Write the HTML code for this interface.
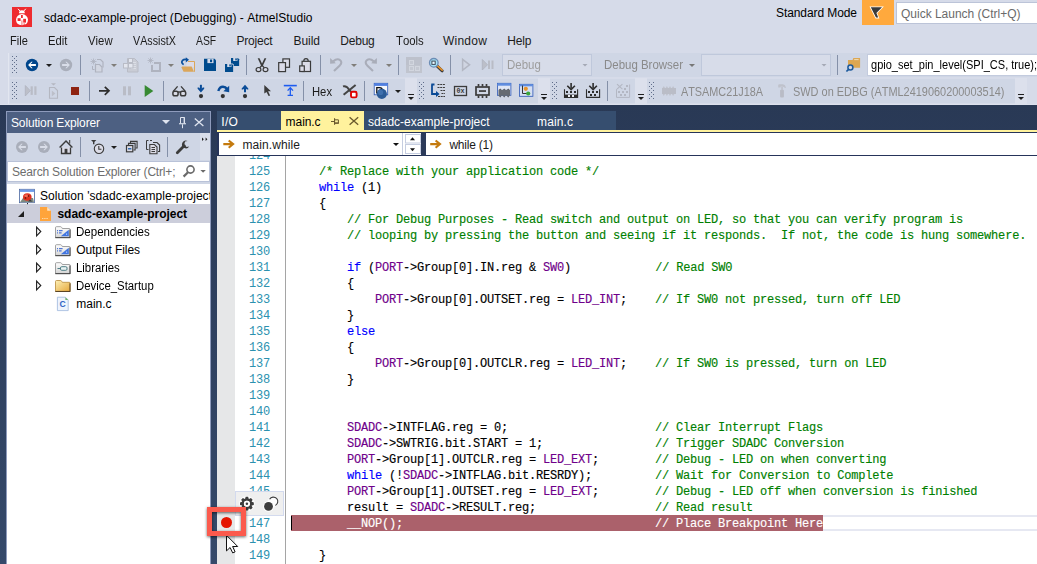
<!DOCTYPE html>
<html lang="en"><head><meta charset="utf-8"><title>sdadc-example-project (Debugging) - AtmelStudio</title>
<style>
html,body{margin:0;padding:0;}
body{width:1037px;height:564px;overflow:hidden;background:#d6dbe9;position:relative;font-family:"Liberation Sans",sans-serif;font-kerning:none;}
#app{position:absolute;left:0;top:0;width:1037px;height:564px;overflow:hidden;}
#app div,#app span,#app svg{position:absolute;}
#app div{box-sizing:border-box;}
.t{white-space:pre;line-height:1;transform-origin:0 50%;}
.c{white-space:pre;line-height:16px;height:16px;font-family:"Liberation Mono",monospace;font-size:12px;letter-spacing:-0.2px;color:#000;left:291px;-webkit-text-stroke:0.14px currentColor;}
#app .c span{position:static;}
.cm{color:#008000;} .kw{color:#0000ff;} .mc{color:#6f008a;} .hl{color:#fff;}
.n{white-space:pre;line-height:16px;height:16px;font-family:"Liberation Mono",monospace;font-size:12px;letter-spacing:-0.2px;color:#2b91af;left:249px;}
</style></head><body><div id="app">
<span class="t" style="left:44px;top:11.84px;font-size:12px;color:#000;letter-spacing:0.052px;">sdadc-example-project (Debugging) - AtmelStudio</span>
<span class="t" style="left:776px;top:6.84px;font-size:12px;color:#000;letter-spacing:-0.088px;">Standard Mode</span>
<div style="left:862px;top:0px;width:32px;height:25px;background:#ffa93d;"></div>
<div style="left:896px;top:2px;width:145px;height:22px;background:#fff;border:1px solid #bcc4d8;"></div>
<span class="t" style="left:901px;top:7.84px;font-size:12px;color:#6a6a6a;letter-spacing:-0.010px;">Quick Launch (Ctrl+Q)</span>
<span class="t" style="left:10.3px;top:34.84px;font-size:12px;color:#1b1b1b;transform:scaleX(0.9206);">File</span>
<span class="t" style="left:48.1px;top:34.84px;font-size:12px;color:#1b1b1b;transform:scaleX(0.9382);">Edit</span>
<span class="t" style="left:88.3px;top:34.84px;font-size:12px;color:#1b1b1b;transform:scaleX(0.9458);">View</span>
<span class="t" style="left:133.1px;top:34.84px;font-size:12px;color:#1b1b1b;transform:scaleX(0.8935);">VAssistX</span>
<span class="t" style="left:195.8px;top:34.84px;font-size:12px;color:#1b1b1b;transform:scaleX(0.8655);">ASF</span>
<span class="t" style="left:236.5px;top:34.84px;font-size:12px;color:#1b1b1b;letter-spacing:-0.191px;">Project</span>
<span class="t" style="left:293.5px;top:34.84px;font-size:12px;color:#1b1b1b;letter-spacing:-0.046px;">Build</span>
<span class="t" style="left:340.2px;top:34.84px;font-size:12px;color:#1b1b1b;letter-spacing:-0.190px;">Debug</span>
<span class="t" style="left:395.6px;top:34.84px;font-size:12px;color:#1b1b1b;transform:scaleX(0.9474);">Tools</span>
<span class="t" style="left:443.1px;top:34.84px;font-size:12px;color:#1b1b1b;letter-spacing:0.204px;">Window</span>
<span class="t" style="left:507.3px;top:34.84px;font-size:12px;color:#1b1b1b;letter-spacing:-0.193px;">Help</span>
<div style="left:10px;top:53px;width:1030px;height:24px;background:#cfd6e5;"></div>
<div style="left:10px;top:79px;width:395px;height:24px;background:#cfd6e5;"></div>
<div style="left:417px;top:79px;width:121px;height:24px;background:#cfd6e5;"></div>
<div style="left:549px;top:79px;width:86px;height:24px;background:#cfd6e5;"></div>
<div style="left:646px;top:79px;width:369px;height:24px;background:#cfd6e5;"></div>
<svg style="left:0;top:0" width="1037" height="105" viewBox="0 0 1037 105"><rect x="12" y="7" width="20" height="20" fill="#ee2b2f"/><path d="M19 13.2 Q19 10.2 21.9 10.2 Q24.8 10.2 24.8 13.2 Z" fill="#fff"/><path d="M20.2 11.2 L18 8.8 M23.6 11.2 L25.8 8.8" fill="none" stroke="#fff" stroke-width="1"/><path d="M22 14 Q27.2 14.6 28 19.6 Q28 25.2 22 25.2 Q16 25.2 16 19.6 Q16.8 14.6 22 14 Z" fill="#fff"/><rect x="21" y="15" width="1.8" height="3" fill="#ee2b2f"/><rect x="17.6" y="18.2" width="3" height="2.8" fill="#ee2b2f"/><rect x="23.2" y="18.8" width="2.8" height="3.8" fill="#ee2b2f"/><rect x="21.6" y="20.4" width="0.7" height="5" fill="#ee2b2f"/><rect x="23.4" y="23.6" width="1.6" height="1" fill="#ee2b2f"/><path d="M870.8 7.2 L882 7.2 L876.4 13 L878.2 17.6 L876 17.6 Z" fill="#fff" stroke="#fff" stroke-width="1.6" stroke-linejoin="miter"/><path d="M870.8 7.2 L882 7.2 L876.4 13 L878.2 17.6 L876 17.6 Z" fill="#3a3a3a"/><rect x="8" y="53" width="1" height="51" fill="#e2e6f0" shape-rendering="crispEdges"/><rect x="0" y="104" width="1037" height="1" fill="#dde1ed" shape-rendering="crispEdges"/><path d="M12 56h1v1h-1zM16 56h1v1h-1zM14 58h1v1h-1zM12 60h1v1h-1zM16 60h1v1h-1zM14 62h1v1h-1zM12 64h1v1h-1zM16 64h1v1h-1zM14 66h1v1h-1zM12 68h1v1h-1zM16 68h1v1h-1zM14 70h1v1h-1zM12 72h1v1h-1zM16 72h1v1h-1z" fill="#5f6d8a" shape-rendering="crispEdges"/><circle cx="32" cy="65" r="6.2" fill="#00468c"/><path d="M28.1 65 L31.3 61.8 H32.7 L30.5 64.1 H35.9 V65.9 H30.5 L32.7 68.2 H31.3 Z" fill="#fff"/><path d="M46.0 64h6l-3.0 3.0z" fill="#1e1e1e"/><circle cx="66" cy="65" r="6.2" fill="#a9aeba"/><path d="M69.9 65 L66.7 61.8 H65.30000000000001 L67.5 64.1 H62.1 V65.9 H67.5 L65.30000000000001 68.2 H66.7 Z" fill="#d9dde8"/><rect x="80" y="55" width="1" height="20" fill="#8490a8" shape-rendering="crispEdges"/><path d="M93.5 58.5v6M90.5 61.5h6M91.4 59.4l4.2 4.2M95.6 59.4l-4.2 4.2" fill="none" stroke="#afb3bf" stroke-width="0.8"/><path d="M97 59.5h3.5l2.5 2.5v5.5" fill="none" stroke="#afb3bf" stroke-width="1.2"/><path d="M95.5 64.5h4l2.5 2.5v5h-6.5z" fill="#d3d7e2" stroke="#afb3bf" stroke-width="1.2"/><path d="M92.5 66v3.5h2" fill="none" stroke="#afb3bf" stroke-width="1"/><path d="M111.0 64h6l-3.0 3.0z" fill="#807e7a"/><path d="M127.5 58.5h7l3.5 3.5v10h-10.5z" fill="#c9ccd5" stroke="#b9bcc6" stroke-width="1"/><path d="M131 62.5h5M131 64.5h5M131 66.5h5M131 68.5h5" fill="none" stroke="#dfe2ea" stroke-width="0.8"/><rect x="128.5" y="58.5" width="4" height="4" fill="#e3e6ee" stroke="#b9bcc6" stroke-width="1"/><rect x="123.5" y="63.5" width="4.5" height="4.5" fill="#e3e6ee" stroke="#b9bcc6" stroke-width="1"/><rect x="128.5" y="63.5" width="4.5" height="4.5" fill="#e3e6ee" stroke="#b9bcc6" stroke-width="1"/><path d="M150.5 57.5v6M147.5 60.5h6M148.4 58.4l4.2 4.2M152.6 58.4l-4.2 4.2" fill="none" stroke="#afb3bf" stroke-width="0.8"/><path d="M154 63h6v8h-8v-6" fill="none" stroke="#afb3bf" stroke-width="2"/><path d="M168.0 64h6l-3.0 3.0z" fill="#807e7a"/><path d="M188 61.5h6.5v10.3" fill="none" stroke="#dba65a" stroke-width="1"/><path d="M186.5 62h7.5v5h-7.5z" fill="#dcdce8"/><path d="M181.3 67.2 L182.2 66.5 H191.6 L194 71.7 H183.6 Z" fill="#dba65a"/><path d="M183.6 64.6 Q180.6 62.6 182.6 60.4 Q184 59 186.6 59.6" fill="none" stroke="#0a4f9c" stroke-width="1.7"/><path d="M185.8 57.2 L189 59.8 L185.8 62.4 Z" fill="#0a4f9c"/><path d="M204 58.8h10.6l1.4 1.4v10.8h-12z" fill="#004b8d"/><rect x="207.4" y="58.8" width="6.1" height="4.3" fill="#d5dae8"/><rect x="210" y="59.5" width="2.1" height="2.7" fill="#004b8d"/><path d="M231 58h6.9l1.2 1.2v6.7h-8.1z" fill="#004b8d"/><rect x="233.2" y="58" width="4.2" height="3" fill="#d5dae8"/><rect x="235.3" y="58.4" width="1.5" height="2" fill="#004b8d"/><path d="M224.4 63.4h8.2l1.4 1.4v7.8h-9.6z" fill="#cfd6e5"/><path d="M225 64h6.9l1.2 1.2v6.7h-8.1z" fill="#004b8d"/><rect x="227.2" y="64" width="4.2" height="3" fill="#d5dae8"/><rect x="229.3" y="64.4" width="1.5" height="2" fill="#004b8d"/><rect x="246" y="55" width="1" height="20" fill="#8490a8" shape-rendering="crispEdges"/><path d="M257.7 58.2 L259.5 58.2 L262.9 65.4 L261.6 66.8 Z" fill="#3b3b3b"/><path d="M266.3 58.2 L264.5 58.2 L261.1 65.4 L262.4 66.8 Z" fill="#3b3b3b"/><path d="M261.6 65.6 L259.6 68 M262.4 65.6 L264.4 68" fill="none" stroke="#3b3b3b" stroke-width="1.2"/><ellipse cx="258.5" cy="69.6" rx="2.4" ry="2.1" fill="#d6d9e6" stroke="#3b3b3b" stroke-width="1.2"/><ellipse cx="265.5" cy="69.6" rx="2.4" ry="2.1" fill="#d6d9e6" stroke="#3b3b3b" stroke-width="1.2"/><rect x="282.9" y="58.9" width="6.6" height="8.4" fill="#dcdce8" stroke="#3b3b3b" stroke-width="1.2"/><rect x="278.7" y="62.6" width="6.8" height="9" fill="#dcdce8" stroke="#3b3b3b" stroke-width="1.2"/><path d="M303.8 61 Q303.8 58.6 306 58.6 Q308.2 58.6 308.2 61" fill="none" stroke="#3b3b3b" stroke-width="1.2"/><rect x="302.1" y="61.3" width="8.4" height="10.2" fill="#dcdce8" stroke="#3b3b3b" stroke-width="1.2"/><rect x="299.7" y="65.9" width="4.6" height="5.6" fill="#dcdce8" stroke="#3b3b3b" stroke-width="1.2"/><rect x="320" y="55" width="1" height="20" fill="#8490a8" shape-rendering="crispEdges"/><path d="M334 71 L339.8 65.4 Q342.6 62.4 340.2 60.2 Q337.2 57.8 333.2 61.4" fill="none" stroke="#a9adb9" stroke-width="2.1"/><path d="M330.1 58 L335.9 63.3 L330.1 63.8 Z" fill="#a9adb9"/><path d="M351.0 64h6l-3.0 3.0z" fill="#807e7a"/><path d="M373 71 L367.2 65.4 Q364.4 62.4 366.8 60.2 Q369.8 57.8 373.8 61.4" fill="none" stroke="#a9adb9" stroke-width="2.1"/><path d="M376.9 58 L371.1 63.3 L376.9 63.8 Z" fill="#a9adb9"/><path d="M386.0 64h6l-3.0 3.0z" fill="#807e7a"/><rect x="398" y="55" width="1" height="20" fill="#8490a8" shape-rendering="crispEdges"/><rect x="406" y="57" width="16" height="16" fill="#bdc1cc"/><rect x="406" y="65" width="16" height="8" fill="#c0c4ce"/><rect x="409.5" y="60.5" width="4" height="4" fill="#c4c8d2" stroke="#d2d6df" stroke-width="1"/><rect x="409.5" y="66.5" width="4" height="4" fill="#c4c8d2" stroke="#d2d6df" stroke-width="1"/><rect x="415.5" y="66.5" width="4" height="4" fill="#c4c8d2" stroke="#d2d6df" stroke-width="1"/><path d="M437.2 66.2 L442.2 70.8" fill="none" stroke="#3d3d3d" stroke-width="3" stroke-linecap="round"/><path d="M437.4 65.8 L442.2 70.2" fill="none" stroke="#e8932a" stroke-width="1.6" stroke-linecap="round"/><circle cx="433.8" cy="62.8" r="4.3" fill="#a5e3f7" stroke="#6c8db5" stroke-width="1.3"/><rect x="431.9" y="61.1" width="3.3" height="3.3" fill="#eafaff" stroke="#3f4a58" stroke-width="1"/><rect x="450" y="55" width="1" height="20" fill="#8490a8" shape-rendering="crispEdges"/><path d="M462.6 59.4 L469.6 64.8 L462.6 70.2 Z" fill="#d0d5e2" stroke="#b3b7c3" stroke-width="1.5"/><path d="M482.3 59.5 L487.5 64.8 L482.3 70 Z" fill="#bcbfc9" stroke="#afb3bf" stroke-width="0.8"/><rect x="488" y="60.5" width="2" height="8.5" fill="#b9bcc6"/><rect x="491.5" y="60.5" width="2" height="8.5" fill="#b9bcc6"/><rect x="502.5" y="54.5" width="89" height="21" fill="#d7dce9" stroke="#bfc8db" stroke-width="1"/><path d="M582.5 64h5l-2.5 2.5z" fill="#a5a9b5"/><path d="M689.0 64h6l-3.0 3.0z" fill="#777"/><rect x="701.5" y="54.5" width="129" height="21" fill="#d7dce9" stroke="#bfc8db" stroke-width="1"/><path d="M821.5 64h5l-2.5 2.5z" fill="#a5a9b5"/><rect x="837" y="55" width="1" height="20" fill="#8490a8" shape-rendering="crispEdges"/><path d="M848 60.1h4.6l0.8-2.1h6.7v9.8h-12.1z" fill="#dca753"/><rect x="854.2" y="59.2" width="4.4" height="0.9" fill="#f3e3c4"/><circle cx="850.4" cy="67.5" r="2.5" fill="#d2d8e6" stroke="#1c5a9c" stroke-width="1.5"/><path d="M848.6 69.3 L846.4 71.5" fill="none" stroke="#1c5a9c" stroke-width="1.7"/><path d="M12 82h1v1h-1zM16 82h1v1h-1zM14 84h1v1h-1zM12 86h1v1h-1zM16 86h1v1h-1zM14 88h1v1h-1zM12 90h1v1h-1zM16 90h1v1h-1zM14 92h1v1h-1zM12 94h1v1h-1zM16 94h1v1h-1zM14 96h1v1h-1zM12 98h1v1h-1zM16 98h1v1h-1z" fill="#5f6d8a" shape-rendering="crispEdges"/><path d="M25.3 85.5 L30.3 90.7 L25.3 96 Z" fill="#bcbfc9" stroke="#afb3bf" stroke-width="0.8"/><rect x="30.6" y="86.3" width="2.2" height="8.6" fill="#b9bcc6"/><rect x="34.3" y="86.3" width="2.2" height="8.6" fill="#b9bcc6"/><path d="M51 83.2h5l-2.5 2.3z" fill="#b4b7c1"/><path d="M49.5 87.5h5l3 3v7.8h-8z" fill="none" stroke="#b4b7c1" stroke-width="1.1"/><path d="M51.8 90.5l3.6 3-3.6 3z" fill="#bcbfc9"/><rect x="71" y="87" width="8" height="8" fill="#8e2311"/><rect x="89" y="81" width="1" height="20" fill="#8490a8" shape-rendering="crispEdges"/><path d="M99 90.8 H108.5 M104.8 86.8 L109 90.8 L104.8 94.8" fill="none" stroke="#2d2d2d" stroke-width="1.7"/><rect x="123" y="86.3" width="3" height="9" fill="#b9bcc6"/><rect x="128" y="86.3" width="3" height="9" fill="#b9bcc6"/><path d="M144.7 85 L153.3 91 L144.7 97 Z" fill="#378a33"/><rect x="163" y="81" width="1" height="20" fill="#8490a8" shape-rendering="crispEdges"/><rect x="172.9" y="91.3" width="5.2" height="4.5" fill="#d9dbe6" stroke="#3b3b3b" stroke-width="1.5" rx="1.8"/><rect x="180.5" y="91.3" width="5.2" height="4.5" fill="#d9dbe6" stroke="#3b3b3b" stroke-width="1.5" rx="1.8"/><path d="M177.8 92h3" fill="none" stroke="#3b3b3b" stroke-width="1.4"/><path d="M173 91.6 L177.6 86.4 M185.6 91.6 L181 86.4" fill="none" stroke="#3b3b3b" stroke-width="1.4"/><path d="M200.9 84.8 V90" fill="none" stroke="#0a4c98" stroke-width="2"/><path d="M197.6 87.6 L199 87.6 L200.9 89.4 L202.8 87.6 L204.2 87.6 L204.2 88.8 L200.9 92.4 L197.6 88.8 Z" fill="#0a4c98"/><circle cx="201" cy="96.1" r="2.1" fill="#333"/><path d="M218.3 91 Q219.6 86.6 223 86.7 Q225.6 86.8 227 89" fill="none" stroke="#0a4c98" stroke-width="2.4"/><path d="M229.2 85.8 V92.2 L223.4 91.2 Z" fill="#0a4c98"/><circle cx="222.8" cy="96.1" r="2.1" fill="#333"/><path d="M245 92.2 V87.4" fill="none" stroke="#0a4c98" stroke-width="2"/><path d="M241.7 89.6 L243.1 89.6 L245 87.8 L246.9 89.6 L248.3 89.6 L248.3 88.4 L245 84.8 L241.7 88.4 Z" fill="#0a4c98"/><circle cx="245" cy="96.1" r="2.1" fill="#333"/><path d="M264.3 84.9 L264.3 93.6 L266.5 91.9 L268.6 96.1 L270.1 95.4 L268.1 91.3 L271 91.2 Z" fill="#3b3b3b"/><rect x="283.8" y="84.8" width="13" height="1.6" fill="#1e5cf0"/><path d="M290.3 88 V95.3 M287.6 95.4 H293" fill="none" stroke="#1e5cf0" stroke-width="1.3"/><path d="M287.6 90.6 L290.3 87.7 L293 90.6" fill="none" stroke="#1e5cf0" stroke-width="1.3"/><rect x="303" y="81" width="1" height="20" fill="#8490a8" shape-rendering="crispEdges"/><path d="M343 86.4 Q346.6 85.4 349.4 90 Q352 94.2 356.4 92.4" fill="none" stroke="#444" stroke-width="2"/><path d="M343.6 94.8 L355.6 85" fill="none" stroke="#444" stroke-width="2"/><rect x="351" y="91.8" width="5.6" height="5.6" fill="#fff" stroke="#e00000" stroke-width="1.9" rx="1.5"/><rect x="364" y="81" width="1" height="20" fill="#8490a8" shape-rendering="crispEdges"/><rect x="374.2" y="83.3" width="13.5" height="11.5" fill="#f4f6fb" stroke="#2c57b5" stroke-width="0.8"/><rect x="374.2" y="83.3" width="13.5" height="2.6" fill="#4f7fe0"/><path d="M376.8 87.6h2.8q2.6 0 2.6 2.6 q0 2.6 -2.6 2.6h-2.8z" fill="none" stroke="#111" stroke-width="1.3"/><circle cx="381.8" cy="93.8" r="5.1" fill="#2b5b97"/><circle cx="380.6" cy="92.4" r="2.6" fill="#3f70ae"/><path d="M395.0 90h6l-3.0 3.0z" fill="#1e1e1e"/><rect x="405" y="78" width="12" height="26" fill="#dce0ec" shape-rendering="crispEdges"/><rect x="408" y="94" width="6" height="1" fill="#1e1e1e" shape-rendering="crispEdges"/><path d="M408 97h6l-3 3z" fill="#1e1e1e"/><path d="M419 82h1v1h-1zM423 82h1v1h-1zM421 84h1v1h-1zM419 86h1v1h-1zM423 86h1v1h-1zM421 88h1v1h-1zM419 90h1v1h-1zM423 90h1v1h-1zM421 92h1v1h-1zM419 94h1v1h-1zM423 94h1v1h-1zM421 96h1v1h-1zM419 98h1v1h-1zM423 98h1v1h-1z" fill="#5f6d8a" shape-rendering="crispEdges"/><path d="M431.3 84.5 H434.5 M432 84.5 V94 H437" fill="none" stroke="#0a4a96" stroke-width="1.8"/><path d="M436 91 L439.6 94 L436 97 Z" fill="#0a4a96"/><path d="M437.5 84.5h7.5M437.5 87.5h7.5M440.5 90.5h4.5M441.5 93.5h3.5M438 96.5h7" fill="none" stroke="#3b3b3b" stroke-width="1" stroke-dasharray="2 0.7"/><rect x="454.5" y="86.5" width="12" height="9" fill="none" stroke="#3b3b3b" stroke-width="1.3"/><text x="456.5" y="93.4" font-family="Liberation Mono, monospace" font-weight="bold" font-size="6.6" fill="#3b3b3b" textLength="8" lengthAdjust="spacingAndGlyphs">0x</text><rect x="476" y="87" width="13" height="8" fill="none" stroke="#3b3b3b" stroke-width="1.7"/><rect x="479" y="90.2" width="7" height="1.7" fill="#3b3b3b"/><path d="M478.5 84v2.5M482.5 84v2.5M486.5 84v2.5M478.5 95.5v2.5M482.5 95.5v2.5M486.5 95.5v2.5" fill="none" stroke="#3b3b3b" stroke-width="1.7"/><rect x="497.4" y="83.3" width="13.5" height="12" fill="#dfe6f5" stroke="#2c57b5" stroke-width="0.8"/><rect x="497.4" y="83.3" width="13.5" height="2.4" fill="#5f8de0"/><rect x="498.5" y="89.8" width="11.5" height="6" fill="#666b73"/><path d="M500.2 88.6l1.4 1.4h-2.8zM504.2 88.6l1.4 1.4h-2.8zM508.2 88.6l1.4 1.4h-2.8zM500.2 97.4l1.4-1.6h-2.8zM504.2 97.4l1.4-1.6h-2.8zM508.2 97.4l1.4-1.6h-2.8z" fill="#555a62"/><rect x="519.4" y="84.3" width="13.5" height="12" fill="#d5dff3" stroke="#2c57b5" stroke-width="0.8"/><rect x="519.4" y="84.3" width="13.5" height="2" fill="#5f8de0"/><path d="M522.5 85.5 V93.5 H527" fill="none" stroke="#333" stroke-width="1"/><circle cx="525.8" cy="88.8" r="2.1" fill="#e8962e"/><circle cx="528.2" cy="93.5" r="2.1" fill="#3aa63a"/><rect x="538" y="78" width="12" height="26" fill="#dce0ec" shape-rendering="crispEdges"/><rect x="541" y="94" width="6" height="1" fill="#1e1e1e" shape-rendering="crispEdges"/><path d="M541 97h6l-3 3z" fill="#1e1e1e"/><path d="M552 82h1v1h-1zM556 82h1v1h-1zM554 84h1v1h-1zM552 86h1v1h-1zM556 86h1v1h-1zM554 88h1v1h-1zM552 90h1v1h-1zM556 90h1v1h-1zM554 92h1v1h-1zM552 94h1v1h-1zM556 94h1v1h-1zM554 96h1v1h-1zM552 98h1v1h-1zM556 98h1v1h-1z" fill="#5f6d8a" shape-rendering="crispEdges"/><path d="M571.1 83 V88.6" fill="none" stroke="#2d2d2d" stroke-width="1.6"/><path d="M567.3 85.8 L571.1 89.6 L574.9 85.8" fill="none" stroke="#2d2d2d" stroke-width="1.6"/><path d="M564.5 89.2 V97.4 H577.6 V89.2" fill="none" stroke="#2d2d2d" stroke-width="1.1"/><rect x="566" y="91" width="2" height="2" fill="#2d2d2d" shape-rendering="crispEdges"/><rect x="570" y="91" width="2" height="2" fill="#2d2d2d" shape-rendering="crispEdges"/><rect x="574" y="91" width="2" height="2" fill="#2d2d2d" shape-rendering="crispEdges"/><rect x="564.5" y="94.6" width="13.1" height="3.3" fill="#2d2d2d"/><rect x="568" y="95" width="2" height="2" fill="#eceef5" shape-rendering="crispEdges"/><rect x="572" y="95" width="2" height="2" fill="#eceef5" shape-rendering="crispEdges"/><path d="M593.1 83 V88.6" fill="none" stroke="#2d2d2d" stroke-width="1.6"/><path d="M589.3 85.8 L593.1 89.6 L596.9 85.8" fill="none" stroke="#2d2d2d" stroke-width="1.6"/><path d="M586.5 89.2 V97.4 H599.6 V89.2" fill="none" stroke="#2d2d2d" stroke-width="1.1"/><rect x="588" y="91" width="2" height="2" fill="#2d2d2d" shape-rendering="crispEdges"/><rect x="592" y="91" width="2" height="2" fill="#2d2d2d" shape-rendering="crispEdges"/><rect x="596" y="91" width="2" height="2" fill="#2d2d2d" shape-rendering="crispEdges"/><rect x="590" y="94" width="2" height="2" fill="#2d2d2d" shape-rendering="crispEdges"/><rect x="594" y="94" width="2" height="2" fill="#2d2d2d" shape-rendering="crispEdges"/><rect x="607" y="81" width="1" height="20" fill="#8490a8" shape-rendering="crispEdges"/><path d="M616.5 89.2 V97.4 H629.6 V84.5" fill="none" stroke="#b3b7c3" stroke-width="1"/><path d="M617 84.2 l5.4 5 M622.4 84.2 l-5.4 5" fill="none" stroke="#b3b7c3" stroke-width="1.1"/><rect x="626" y="85" width="2" height="2" fill="#b3b7c3" shape-rendering="crispEdges"/><rect x="624" y="88" width="2" height="2" fill="#b3b7c3" shape-rendering="crispEdges"/><rect x="618" y="91" width="2" height="2" fill="#b3b7c3" shape-rendering="crispEdges"/><rect x="622" y="91" width="2" height="2" fill="#b3b7c3" shape-rendering="crispEdges"/><rect x="626" y="91" width="2" height="2" fill="#b3b7c3" shape-rendering="crispEdges"/><rect x="620" y="94" width="2" height="2" fill="#b3b7c3" shape-rendering="crispEdges"/><rect x="624" y="94" width="2" height="2" fill="#b3b7c3" shape-rendering="crispEdges"/><rect x="635" y="78" width="12" height="26" fill="#dce0ec" shape-rendering="crispEdges"/><rect x="638" y="94" width="6" height="1" fill="#1e1e1e" shape-rendering="crispEdges"/><path d="M638 97h6l-3 3z" fill="#1e1e1e"/><path d="M649 82h1v1h-1zM653 82h1v1h-1zM651 84h1v1h-1zM649 86h1v1h-1zM653 86h1v1h-1zM651 88h1v1h-1zM649 90h1v1h-1zM653 90h1v1h-1zM651 92h1v1h-1zM649 94h1v1h-1zM653 94h1v1h-1zM651 96h1v1h-1zM649 98h1v1h-1zM653 98h1v1h-1z" fill="#5f6d8a" shape-rendering="crispEdges"/><rect x="662" y="88" width="14" height="6" fill="#babdc7"/><path d="M662.6 88l1.2-2 1.2 2zM665.7 88l1.2-2 1.2 2zM668.8 88l1.2-2 1.2 2zM671.9 88l1.2-2 1.2 2zM662.6 94l1.2 2 1.2-2zM665.7 94l1.2 2 1.2-2zM668.8 94l1.2 2 1.2-2zM671.9 94l1.2 2 1.2-2z" fill="#bfc2cc"/><rect x="780.1" y="89.8" width="3.8" height="7.6" fill="#b9bcc6" rx="0.9"/><rect x="781.2" y="86.6" width="1.7" height="3.6" fill="#bfc2cc"/><path d="M778.2 87.6 V85 Q778.2 84.2 779.4 84.2 H783 Q785.4 84.6 786 87.8 L785 88 Q784 86.4 782 86.4 H780.6 V87.6 Z" fill="#bfc2cc"/><rect x="1015" y="78" width="12" height="26" fill="#dce0ec" shape-rendering="crispEdges"/><rect x="1018" y="94" width="6" height="1" fill="#1e1e1e" shape-rendering="crispEdges"/><path d="M1018 97h6l-3 3z" fill="#1e1e1e"/></svg>
<span class="t" style="left:506.7px;top:58.84px;font-size:12px;color:#9d9d9d;transform:scaleX(0.9558);">Debug</span>
<span class="t" style="left:603.5px;top:58.84px;font-size:12px;color:#8a8a8a;transform:scaleX(0.9552);">Debug Browser</span>
<div style="left:867px;top:54px;width:175px;height:22px;background:#fff;border:1px solid #c3cbde;"></div>
<span class="t" style="left:870.5px;top:58.84px;font-size:12px;color:#000;transform:scaleX(0.9183);">gpio_set_pin_level(SPI_CS, true);</span>
<span class="t" style="left:311.5px;top:85.84px;font-size:12px;color:#1b1b1b;transform:scaleX(0.9372);">Hex</span>
<span class="t" style="left:681px;top:85.84px;font-size:12px;color:#8a8a8a;transform:scaleX(0.9040);">ATSAMC21J18A</span>
<span class="t" style="left:793px;top:85.84px;font-size:12px;color:#8a8a8a;transform:scaleX(0.9111);">SWD on EDBG (ATML2419060200003514)</span>
<div style="left:0px;top:105px;width:1037px;height:459px;background:#293955;background:linear-gradient(#293955 0px,#2a3a57 30px,#35496a 459px);"></div>
<div style="left:6px;top:111px;width:205px;height:453px;background:#fff;border-left:1px solid #8e9bbc;border-top:1px solid #8e9bbc;border-right:1px solid #8e9bbc;"></div>
<div style="left:7px;top:112px;width:203px;height:21px;background:#4d6082;"></div>
<span class="t" style="left:11px;top:116.84px;font-size:12px;color:#fff;letter-spacing:-0.149px;">Solution Explorer</span>
<div style="left:7px;top:133px;width:203px;height:51px;background:#cfd6e5;"></div>
<div style="left:7px;top:161px;width:203px;height:21px;background:#fff;border:1px solid #b9c2d8;"></div>
<span class="t" style="left:12px;top:165.84px;font-size:12px;color:#6d6d6d;letter-spacing:-0.180px;">Search Solution Explorer (Ctrl+;</span>
<div style="left:7px;top:204px;width:203px;height:19px;background:#cccedb;"></div>
<span class="t" style="left:40px;top:189.84px;font-size:12px;color:#000;letter-spacing:0.054px;">Solution &#x27;sdadc-example-project</span>
<span class="t" style="left:57.5px;top:207.84px;font-size:12px;color:#000;font-weight:bold;letter-spacing:-0.061px;">sdadc-example-project</span>
<span class="t" style="left:76.3px;top:225.84px;font-size:12px;color:#000;transform:scaleX(0.9606);">Dependencies</span>
<span class="t" style="left:76.3px;top:243.84px;font-size:12px;color:#000;letter-spacing:-0.090px;">Output Files</span>
<span class="t" style="left:76.3px;top:261.84px;font-size:12px;color:#000;transform:scaleX(0.9496);">Libraries</span>
<span class="t" style="left:76.3px;top:279.84px;font-size:12px;color:#000;transform:scaleX(0.9471);">Device_Startup</span>
<span class="t" style="left:76.3px;top:297.84px;font-size:12px;color:#000;letter-spacing:-0.029px;">main.c</span>
<svg style="left:0;top:0" width="217" height="564" viewBox="0 0 217 564"><path d="M162 120h8l-4 4z" fill="#dfe4ef"/><path d="M180.5 123.5v-6h4v6" fill="none" stroke="#dfe4ef" stroke-width="1"/><rect x="183.6" y="117.5" width="1.2" height="6" fill="#dfe4ef"/><rect x="179" y="123.2" width="7" height="1.1" fill="#dfe4ef"/><rect x="182" y="124.3" width="1" height="3.9" fill="#dfe4ef"/><path d="M194.8 118.4l8.6 7.6M203.4 118.4l-8.6 7.6" fill="none" stroke="#dfe4ef" stroke-width="1.3"/><circle cx="22" cy="147" r="6" fill="#a9aeba"/><path d="M18.1 147 L21.3 143.8 H22.700000000000003 L20.5 146.1 H25.9 V147.9 H20.5 L22.700000000000003 150.2 H21.3 Z" fill="#d9dde8"/><circle cx="44" cy="147" r="6" fill="#a9aeba"/><path d="M47.9 147 L44.699999999999996 143.8 H43.3 L45.5 146.1 H40.1 V147.9 H45.5 L43.3 150.2 H44.699999999999996 Z" fill="#d9dde8"/><path d="M61.5 147.5v6h9v-6" fill="#dcdce6" stroke="#3b3b3b" stroke-width="1.3"/><path d="M59.6 147.6 L66 141 L72.4 147.6" fill="none" stroke="#3b3b3b" stroke-width="1.4"/><rect x="64.6" y="148.8" width="2.8" height="4.5" fill="#3b3b3b"/><rect x="69.2" y="140" width="1" height="3.6" fill="#3b3b3b"/><rect x="80" y="137" width="1" height="20" fill="#8490a8" shape-rendering="crispEdges"/><path d="M91 140h5.4l-2 2v2.2h-1.4v-2.2z" fill="#3b3b3b"/><circle cx="99" cy="148.8" r="4.7" fill="#dcdce6" stroke="#3b3b3b" stroke-width="1.1"/><path d="M98.8 146v3.3h2.6" fill="none" stroke="#3b3b3b" stroke-width="1.1"/><path d="M111.0 146h6l-3.0 3.0z" fill="#1e1e1e"/><path d="M130.5 143v-1.6h6.6v6.6h-1.6" fill="none" stroke="#3b3b3b" stroke-width="1.1"/><path d="M128.5 145v-1.6h6.6v6.6h-1.6" fill="none" stroke="#3b3b3b" stroke-width="1.1"/><rect x="126.5" y="145.5" width="6.3" height="6.3" fill="#dcdce6" stroke="#3b3b3b" stroke-width="1.2"/><rect x="128" y="148.2" width="3.4" height="1.2" fill="#0a50a0"/><path d="M148.5 140.5h-2v9h2" fill="none" stroke="#3b3b3b" stroke-width="1"/><path d="M150 140.5h2" fill="none" stroke="#3b3b3b" stroke-width="1"/><path d="M153 142.5h4l2.6 2.6v6.4h-1.6" fill="none" stroke="#3b3b3b" stroke-width="1.1"/><path d="M149.8 144.5h4.6l2.6 2.6v6.6h-7.2z" fill="#dcdce6" stroke="#3b3b3b" stroke-width="1.1"/><path d="M151.5 147.5h3.5M151.5 149.5h3.5M151.5 151.5h3.5" fill="none" stroke="#3b3b3b" stroke-width="1"/><rect x="167" y="137" width="1" height="20" fill="#8490a8" shape-rendering="crispEdges"/><path d="M177.3 152.7 L184.2 145.8" fill="none" stroke="#3b3b3b" stroke-width="2.8" stroke-linecap="round"/><path d="M187.6 140.9 A3.9 3.9 0 1 0 189.2 146.6 L186.6 147 L184.3 144.4 L185 141.6 Z" fill="#3b3b3b"/><rect x="200" y="133" width="10" height="27" fill="#d9deea"/><path d="M202 137.6l1.8 1.7-1.8 1.7zM205.6 137.6l1.8 1.7-1.8 1.7z" fill="#1e1e1e"/><circle cx="190.5" cy="169.5" r="3.6" fill="none" stroke="#6a6a6a" stroke-width="1.6"/><path d="M188 172.2 L183.6 176.6" fill="none" stroke="#6a6a6a" stroke-width="2.2"/><path d="M200.4 170h5.4l-2.7 2.7z" fill="#6a6a6a"/><rect x="19.5" y="189.3" width="15" height="13.4" fill="#fff" stroke="#4a66a0" stroke-width="0.8"/><rect x="19.9" y="189.7" width="14.2" height="2.2" fill="#6d9bea"/><path d="M20 202.3 L23 198 L33 198 L34 202.3 Z" fill="#7d8a80"/><ellipse cx="27.3" cy="197" rx="4.3" ry="3.8" fill="#e0311f"/><ellipse cx="26.3" cy="195.8" rx="2" ry="1.4" fill="#f26a55"/><circle cx="25.5" cy="198" r="0.8" fill="#4a1208"/><circle cx="28.5" cy="196" r="0.8" fill="#4a1208"/><path d="M30 199.5 L32.5 201.5 L28 201.5 Z" fill="#3b3b3b"/><rect x="27" y="203" width="1" height="1.2" fill="#222"/><path d="M24 211v6h-6z" fill="#1e1e1e"/><path d="M36.6 227.2v8.6l4.2-4.3z" fill="#fff" stroke="#1e1e1e" stroke-width="1.1"/><path d="M36.6 245.2v8.6l4.2-4.3z" fill="#fff" stroke="#1e1e1e" stroke-width="1.1"/><path d="M36.6 263.2v8.6l4.2-4.3z" fill="#fff" stroke="#1e1e1e" stroke-width="1.1"/><path d="M36.6 281.2v8.6l4.2-4.3z" fill="#fff" stroke="#1e1e1e" stroke-width="1.1"/><path d="M40 207h7.2l3.8 3.8v10.2h-11z" fill="#ffa43b"/><path d="M47.2 207l3.8 3.8h-3.8z" fill="#ffe3c0"/><path d="M42 218.5h1.4M44.2 218.5h1.4M46.4 218.5h1.4" fill="none" stroke="#ffd9a8" stroke-width="1.2"/><linearGradient id="fgd226" x1="0" y1="0" x2="0" y2="1"><stop offset="0" stop-color="#ffffff"/><stop offset="1" stop-color="#d4d4d4"/></linearGradient><path d="M55.5 227.7q0-1 1-1h4q.8 0 1.2 .8l.6 1h7q.8 0 .8 .8v8.2h-14.6z" fill="url(#fgd226)" stroke="#8a8a8a" stroke-width="0.8"/><path d="M55.3 237.7h14.9M70 229.5v8.4" fill="none" stroke="#3f3f3f" stroke-width="1"/><path d="M68.8 229.7v6.6h-8z" fill="#3f74e0"/><path d="M57 230.7h1M59 230.7h3.6M57 232.9h1M59 232.9h2.6" fill="none" stroke="#2a5bd0" stroke-width="1"/><circle cx="66.6" cy="234.1" r="0.7" fill="#cfe0ff"/><linearGradient id="fgd244" x1="0" y1="0" x2="0" y2="1"><stop offset="0" stop-color="#ffffff"/><stop offset="1" stop-color="#d4d4d4"/></linearGradient><path d="M55.5 245.7q0-1 1-1h4q.8 0 1.2 .8l.6 1h7q.8 0 .8 .8v8.2h-14.6z" fill="url(#fgd244)" stroke="#8a8a8a" stroke-width="0.8"/><path d="M55.3 255.7h14.9M70 247.5v8.4" fill="none" stroke="#3f3f3f" stroke-width="1"/><path d="M68.8 247.7v6.6h-8z" fill="#3f74e0"/><path d="M57 248.7h1M59 248.7h3.6M57 250.9h1M59 250.9h2.6" fill="none" stroke="#2a5bd0" stroke-width="1"/><circle cx="66.6" cy="252.1" r="0.7" fill="#cfe0ff"/><linearGradient id="fgl262" x1="0" y1="0" x2="0" y2="1"><stop offset="0" stop-color="#ffffff"/><stop offset="1" stop-color="#d4d4d4"/></linearGradient><path d="M55.5 263.7q0-1 1-1h4q.8 0 1.2 .8l.6 1h7q.8 0 .8 .8v8.2h-14.6z" fill="url(#fgl262)" stroke="#8a8a8a" stroke-width="0.8"/><path d="M55.3 273.7h14.9M70 265.5v8.4" fill="none" stroke="#3f3f3f" stroke-width="1"/><rect x="60.5" y="266.7" width="6.5" height="3.6" fill="#e9f3f3" stroke="#4f7f86" stroke-width="1" rx="1.2"/><path d="M57.5 268.5h3" fill="none" stroke="#4f7f86" stroke-width="1"/><linearGradient id="yf" x1="0" y1="0" x2="1" y2="1"><stop offset="0" stop-color="#fdf0b6"/><stop offset="1" stop-color="#e6a93c"/></linearGradient><path d="M55.5 281.5q0-1 1-1h4q.8 0 1.2 .8l.6 1h7q.8 0 .8 .8v8.2h-14.6z" fill="url(#yf)" stroke="#b88a3a" stroke-width="0.8"/><path d="M55.3 291.5h14.9M70 283.3v8.4" fill="none" stroke="#5a4524" stroke-width="1"/><path d="M57.4 297.2h8l2.8 2.8v10.6h-10.8z" fill="#eef4fd" stroke="#9db6dc" stroke-width="0.8"/><path d="M65.4 297.2v2.8h2.8z" fill="#6fb26a"/><text x="59.4" y="307.3" font-family="Liberation Sans, sans-serif" font-weight="bold" font-size="8.6" fill="#2f63c4">C</text></svg>
<div style="left:210px;top:111px;width:1px;height:453px;background:#8e9bbc;"></div>
<div style="left:211px;top:105px;width:6px;height:459px;background:#293955;background:linear-gradient(#293955 0px,#2a3a57 30px,#35496a 459px);"></div>
<div style="left:217px;top:111px;width:399px;height:19px;background:#364e6f;"></div>
<div style="left:281px;top:111px;width:83px;height:19px;background:#fff29d;"></div>
<div style="left:217px;top:130px;width:820px;height:2px;background:#fff29d;"></div>
<span class="t" style="left:221.3px;top:115.54px;font-size:12px;color:#fff;letter-spacing:0.249px;">I/O</span>
<span class="t" style="left:285.6px;top:115.54px;font-size:12px;color:#000;letter-spacing:-0.069px;">main.c</span>
<span class="t" style="left:368px;top:115.54px;font-size:12px;color:#fff;letter-spacing:0.011px;">sdadc-example-project</span>
<span class="t" style="left:537px;top:115.54px;font-size:12px;color:#fff;letter-spacing:0.131px;">main.c</span>
<div style="left:217px;top:156px;width:820px;height:408px;background:#fff;"></div>
<div style="left:217px;top:156px;width:18px;height:408px;background:#e6e7e8;"></div>
<div style="left:285px;top:156px;width:1px;height:408px;background:#a5a5a5;"></div>
<div style="left:291px;top:515px;width:746px;height:16px;background:transparent;border-top:2px solid #e6e8f2;border-bottom:2px solid #e6e8f2;"></div>
<div style="left:291px;top:515px;width:532px;height:16px;background:#ab616b;"></div>
<div style="left:291px;top:516px;width:1px;height:14px;background:#000;"></div>
<div class="n" style="top:148.0px">124</div>
<div class="n" style="top:164.0px">125</div>
<div class="c" style="top:164.0px">    <span class="cm">/* Replace with your application code */</span></div>
<div class="n" style="top:180.0px">126</div>
<div class="c" style="top:180.0px">    <span class="kw">while</span> (1)</div>
<div class="n" style="top:196.0px">127</div>
<div class="c" style="top:196.0px">    {</div>
<div class="n" style="top:212.0px">128</div>
<div class="c" style="top:212.0px">        <span class="cm">// For Debug Purposes - Read switch and output on LED, so that you can verify program is</span></div>
<div class="n" style="top:228.0px">129</div>
<div class="c" style="top:228.0px">        <span class="cm">// looping by pressing the button and seeing if it responds.  If not, the code is hung somewhere.</span></div>
<div class="n" style="top:244.0px">130</div>
<div class="n" style="top:260.0px">131</div>
<div class="c" style="top:260.0px">        <span class="kw">if</span> (<span class="mc">PORT</span>-&gt;Group[0].IN.reg &amp; <span class="mc">SW0</span>)            <span class="cm">// Read SW0</span></div>
<div class="n" style="top:276.0px">132</div>
<div class="c" style="top:276.0px">        {</div>
<div class="n" style="top:292.0px">133</div>
<div class="c" style="top:292.0px">            <span class="mc">PORT</span>-&gt;Group[0].OUTSET.reg = <span class="mc">LED_INT</span>;    <span class="cm">// If SW0 not pressed, turn off LED</span></div>
<div class="n" style="top:308.0px">134</div>
<div class="c" style="top:308.0px">        }</div>
<div class="n" style="top:324.0px">135</div>
<div class="c" style="top:324.0px">        <span class="kw">else</span></div>
<div class="n" style="top:340.0px">136</div>
<div class="c" style="top:340.0px">        {</div>
<div class="n" style="top:356.0px">137</div>
<div class="c" style="top:356.0px">            <span class="mc">PORT</span>-&gt;Group[0].OUTCLR.reg = <span class="mc">LED_INT</span>;    <span class="cm">// If SW0 is pressed, turn on LED</span></div>
<div class="n" style="top:372.0px">138</div>
<div class="c" style="top:372.0px">        }</div>
<div class="n" style="top:388.0px">139</div>
<div class="n" style="top:404.0px">140</div>
<div class="n" style="top:420.0px">141</div>
<div class="c" style="top:420.0px">        <span class="mc">SDADC</span>-&gt;INTFLAG.reg = 0;                     <span class="cm">// Clear Interrupt Flags</span></div>
<div class="n" style="top:436.0px">142</div>
<div class="c" style="top:436.0px">        <span class="mc">SDADC</span>-&gt;SWTRIG.bit.START = 1;                <span class="cm">// Trigger SDADC Conversion</span></div>
<div class="n" style="top:452.0px">143</div>
<div class="c" style="top:452.0px">        <span class="mc">PORT</span>-&gt;Group[1].OUTCLR.reg = <span class="mc">LED_EXT</span>;        <span class="cm">// Debug - LED on when converting</span></div>
<div class="n" style="top:468.0px">144</div>
<div class="c" style="top:468.0px">        <span class="kw">while</span> (!<span class="mc">SDADC</span>-&gt;INTFLAG.bit.RESRDY);         <span class="cm">// Wait for Conversion to Complete</span></div>
<div class="n" style="top:484.0px">145</div>
<div class="c" style="top:484.0px">        <span class="mc">PORT</span>-&gt;Group[1].OUTSET.reg = <span class="mc">LED_EXT</span>;        <span class="cm">// Debug - LED off when conversion is finished</span></div>
<div class="c" style="top:500.0px">        result = <span class="mc">SDADC</span>-&gt;RESULT.reg;                 <span class="cm">// Read result</span></div>
<div class="n" style="top:516.0px">147</div>
<div class="c" style="top:516.0px">        <span class="hl">__NOP();                                    // Place Breakpoint Here</span></div>
<div class="n" style="top:532.0px">148</div>
<div class="n" style="top:548.0px">149</div>
<div class="c" style="top:548.0px">    }</div>
<div style="left:217px;top:132px;width:820px;height:24px;background:#fff;border-top:1px solid #26345a;border-bottom:1px solid #26345a;border-left:2px solid #26345a;"></div>
<div style="left:421px;top:132px;width:5px;height:24px;background:#2b3a5a;"></div>
<span class="t" style="left:242.5px;top:138.84px;font-size:12px;color:#1b1b1b;letter-spacing:0.068px;">main.while</span>
<span class="t" style="left:449.4px;top:138.84px;font-size:12px;color:#1b1b1b;letter-spacing:-0.218px;">while (1)</span>
<svg style="left:0;top:0" width="1037" height="564" viewBox="0 0 1037 564"><path d="M331 121.5h3.4" fill="none" stroke="#6b5a2e" stroke-width="1"/><rect x="334" y="118.2" width="1.1" height="6.6" fill="#6b5a2e"/><path d="M335 119.8h3.4v3.2h-3.4" fill="none" stroke="#6b5a2e" stroke-width="1"/><rect x="335" y="122.6" width="3.9" height="1.2" fill="#6b5a2e"/><path d="M349.6 117.2l8.6 7.6M358.2 117.2l-8.6 7.6" fill="none" stroke="#6b5a2e" stroke-width="1.3"/><path d="M223.3 144.1h9M228.70000000000002 140.5l4.4 3.6-4.4 3.6" fill="none" stroke="#c47a0e" stroke-width="2.1"/><path d="M430.2 144.1h9M435.59999999999997 140.5l4.4 3.6-4.4 3.6" fill="none" stroke="#c47a0e" stroke-width="2.1"/><path d="M393 143h6l-3 3z" fill="#111"/><rect x="402" y="133" width="1" height="22" fill="#c5cde0"/><rect x="405.5" y="134.5" width="15" height="8.5" fill="#fff" stroke="#c5cde0" stroke-width="1"/><rect x="405.5" y="144.5" width="15" height="9" fill="#fff" stroke="#c5cde0" stroke-width="1"/><path d="M410 140.2h5l-2.5-3z" fill="#111"/><path d="M410 148.2h5l-2.5 3z" fill="#111"/></svg>
<div style="left:235px;top:491px;width:49px;height:25px;background:#efefef;border:1px solid #d3daee;"></div>
<svg style="left:0;top:0" width="1037" height="564" viewBox="0 0 1037 564"><circle cx="246.9" cy="503.7" r="7.8" fill="#fff" opacity="0.85"/><path d="M245.72 496.80 L248.08 496.80 L248.73 498.83 L249.05 498.96 L250.94 497.98 L252.62 499.66 L251.64 501.55 L251.77 501.87 L253.80 502.52 L253.80 504.88 L251.77 505.53 L251.64 505.85 L252.62 507.74 L250.94 509.42 L249.05 508.44 L248.73 508.57 L248.08 510.60 L245.72 510.60 L245.07 508.57 L244.75 508.44 L242.86 509.42 L241.18 507.74 L242.16 505.85 L242.03 505.53 L240.00 504.88 L240.00 502.52 L242.03 501.87 L242.16 501.55 L241.18 499.66 L242.86 497.98 L244.75 498.96 L245.07 498.83 Z M249.9 503.7 A3.0 3.0 0 1 0 243.9 503.7 A3.0 3.0 0 1 0 249.9 503.7 Z" fill="#3d3d3d" fill-rule="evenodd"/><circle cx="246.9" cy="503.7" r="3.0" fill="#fff"/><circle cx="246.9" cy="503.7" r="1.25" fill="#3d3d3d"/><circle cx="273.5" cy="501.4" r="5.4" fill="#fff" opacity="0.85"/><circle cx="268.5" cy="506.4" r="5.4" fill="#fff" opacity="0.85"/><path d="M269.6 499.3 A4.4 4.4 0 1 1 275.4 505.4" fill="none" stroke="#3d3d3d" stroke-width="1.15"/><circle cx="268.5" cy="506.4" r="4.4" fill="#3d3d3d"/></svg>
<svg style="left:225px;top:534px" width="15" height="21" viewBox="0 0 15 21"><path d="M1.5 1.3 V16.9 L5.1 13.5 L7.7 18.9 L10.1 17.9 L7.6 12.5 H12.7 Z" fill="#fff" stroke="#111" stroke-width="1" stroke-linejoin="miter"/></svg>
<div style="left:220.7px;top:516.7px;width:11.2px;height:11.2px;background:#e51400;border-radius:50%;"></div>
<div style="left:207px;top:507px;width:39px;height:29px;background:transparent;border:5px solid #fb5a4d;filter:drop-shadow(0.5px 1.5px 1.5px rgba(0,0,0,.6));"></div>
</div></body></html>
